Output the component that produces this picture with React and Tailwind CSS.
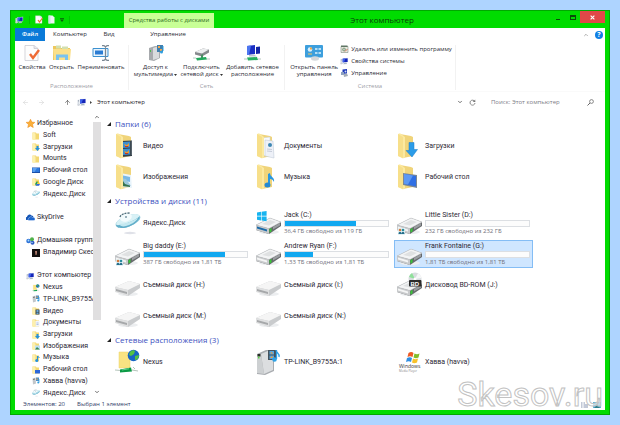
import React from 'react'
import { ArrowLeft, ArrowRight, ArrowUp, ChevronDown, ChevronUp } from 'lucide-react'

const Computer = ({ className }) => (
    <svg viewBox="0 0 20 16" className={className}>
        <path d="M1 4l4-1v9l-4 1z" fill="#d5dbe3" />
        <path d="M2 5l2-.5v2L2 7z" fill="#8b95a5" />
        <path d="M5 2l13-1v10L5 12z" fill="#e8edf5" />
        <path d="M6 3l11-1v8L6 11z" fill="#1424b8" />
        <path d="M6 3l6-.5L9 10.6 6 11z" fill="#3d62ea" />
        <path d="M9 12l5-.5 2 3-9 .5z" fill="#a9b7c7" />
        <path d="M0 13l5-1 2 2-5 2z" fill="#c9ced6" />
    </svg>
)

// small yellow folder, children are painted over its lower right corner
const MiniFolder = ({ children }) => (
    <svg viewBox="0 0 16 16" className="h-2 w-2 shrink-0">
        <path d="M1 1h7l1 2h5v12H1z" fill="#f3d873" />
        <path d="M1 1l6 2v13l-6-1z" fill="#fdf0ae" />
        {children}
    </svg>
)

const Wmp = ({ className }) => (
    <svg viewBox="0 0 16 16" className={className}>
        <path d="M1 3l6-2 1 12-6 2z" fill="#c2c6ca" />
        <path d="M2 4l4-1v2L2 6z" fill="#777" />
        <path d="M8 1h6v7H8z" fill="#4b8fc6" />
        <path d="M9 3h2v3H9z" fill="#f7a23c" />
        <path d="M14 4v7" stroke="#2f9fe0" strokeWidth="1.5" />
        <circle cx="12.500" cy="11" r="2" fill="#2f9fe0" />
    </svg>
)

const YaDisk = ({ className }) => (
    <svg viewBox="0 0 26 24" className={className}>
        <ellipse cx="15" cy="22" rx="6" ry="1.200" fill="#dfe1e8" />
        <ellipse cx="13" cy="10" rx="13" ry="5.500" transform="rotate(-20 13 10)" fill="#8fc8da" />
        <ellipse cx="13" cy="9" rx="12.500" ry="4.500" transform="rotate(-20 13 9)" fill="#d8f1f6" />
        <path d="M1 14c5 1 17-3 24-9-1 6-9 11-16 12-4 0-7 0-8-3z" fill="#62aec9" />
        <path d="M4 13c6 0 14-3 19-6-2 4-8 7-12 8-3 1-6 0-7-2z" fill="#c4e8f0" />
        <ellipse cx="11" cy="6.500" rx="6" ry="4" transform="rotate(-20 11 6.500)" fill="#f3fbfd" />
        <path d="M5 6c1-3 5-4 10-4" stroke="#4a6a78" strokeWidth="1.300" strokeDasharray="2 1" fill="none" />
        <circle cx="11" cy="6" r="1" fill="#7c98a4" />
    </svg>
)

const Flag = () => (
    <g>
        <path d="M1 2.500l4-.7v4H1zM5.600 1.700l5-.8v4.900h-5zM1 6.400h4v4l-4-.7zM5.600 6.400h5v4.900l-5-.8z" fill="#16b4f0" />
    </g>
)

const Drive = ({ kind }) => (
    <svg viewBox="0 0 26 26" className="h-[26px] w-[26px]">
        <ellipse cx="13" cy="22" rx="10" ry="2" fill="#eceef0" />
        {kind === "removable" ? (
            <g>
                <path d="M0 15l14-6 11 3v4l-12 8L0 19z" fill="#c9cbcd" />
                <path d="M0 15l14-6 11 3-12 6z" fill="#f5f5f5" />
                <path d="M0 15l13 3v6L0 20z" fill="#dfe0e1" />
                <path d="M1 17l11 3v2L1 19z" fill="#a6a8aa" />
            </g>
        ) : (
            <g>
                <path d="M0 15l14-7 11 4v4l-12 8L0 20z" fill="#66696c" />
                <path d="M0 15L14 8l11 4-12 6.500z" fill="#f3f4f5" stroke="#c4c6c8" strokeWidth=".5" />
                <path d="M6 14l8-4 6 2-7 3.500z" fill="#dfe1e2" />
                <path d="M0 15l13 3.500v5.500L0 20z" fill="#c8cacc" />
                <path d="M1 16.500l10 3v2l-10-3z" fill={kind === "system" ? "#1c6ba8" : "#f4f5f5"} />
                <path d="M13.500 19l2-1v3.500l-2 1z" fill="#37c837" />
                <path d="M17 17l7-4v2.500l-7 4z" fill="#9b9ea1" />
            </g>
        )}
        {kind === "system" && <Flag />}
        {kind === "shared" && (
            <g>
                <path d="M1 18h7v7H1z" fill="#e4f2f6" />
                <circle cx="3" cy="20" r="1.300" fill="#d67a3a" />
                <circle cx="6" cy="20" r="1.300" fill="#2b8c9e" />
                <path d="M1.500 24c0-3 3-3 3 0zM4.500 24c0-3 3-3 3 0z" fill="#256e8a" />
            </g>
        )}
        {kind === "bd" && (
            <g>
                <circle cx="18" cy="7" r="6.500" fill="#d8dcdf" />
                <path d="M18 7l-6-2a6.500 6.500 0 013-4z" fill="#8fe09a" />
                <path d="M18 7l3-5.800a6.500 6.500 0 013.500 4.800z" fill="#f6f7f8" />
                <circle cx="18" cy="7" r="1.500" fill="#fff" />
                <rect x="12" y="8" width="12.500" height="6.500" rx="1" fill="#2b2b2b" />
                <text x="13.500" y="13.500" fontSize="6" fontWeight="700" fill="#fff" fontFamily="Liberation Sans">BD</text>
            </g>
        )}
    </svg>
)

const Folder = ({ kind }) => (
    <svg viewBox="0 0 26 26" className="h-[26px] w-[26px]">
        <path d="M3 1l11 2 2 1v19l-10 2z" fill="#f0d47a" />
        {kind === "video" && (
            <g>
                <path d="M6 8l11-.5V23L6 24z" fill="#34404a" />
                <path d="M8 9l7-.4v6l-7 .5zM8 16l7-.5v6L8 22z" fill="#3b8fd0" />
                <path d="M9 11l3 1 2-2v3l-3 1zM9 18l3 1 2-2v3l-3 1z" fill="#f09a2c" />
                <path d="M10 13h3v1h-3zM10 20h3v1h-3z" fill="#c2332a" />
                <path d="M6.800 9v14M16.300 8.500v14" stroke="#cfd6da" strokeWidth=".6" strokeDasharray="1 1" />
            </g>
        )}
        {kind === "images" && (
            <g>
                <path d="M5 9l11 2 1 13-12-1z" fill="#e9f4fb" />
                <path d="M6 11l9 2v5l-9-2z" fill="#79b8e6" />
                <path d="M6 15l9 6v2l-9-1z" fill="#35734e" />
                <path d="M6 14l5 1 5 7-6-2z" fill="#9ac7dc" />
            </g>
        )}
        {kind === "documents" && (
            <g>
                <path d="M6 5l8-1v18l-8 1z" fill="#f8fafc" stroke="#c6cfd8" strokeWidth=".5" />
                <path d="M9 7l8 1 1 17-9-2z" fill="#eef1f8" stroke="#b9c4d2" strokeWidth=".5" />
                <circle cx="14" cy="12" r="2" fill="#3d87b4" />
                <path d="M11 16l5 .5M11 18l5 .5" stroke="#b4bccb" strokeWidth=".7" />
            </g>
        )}
        <path d="M1 1l2-.8L8 4v20l-2 1.500L1 23z" fill="#fbe9a0" />
        <path d="M1 1l5 3v21l-5-2z" fill="#f7df8a" />
        {kind === "downloads" && <path d="M12 9.500h5v7h3.500L15 24l-6-6.500h3z" fill="#2c9ce8" stroke="#1b7dc8" strokeWidth=".5" />}
        {kind === "music" && (
            <g>
                <path d="M12 10l2-1c0 4 5 4 4 9-1-2-2-3-4-3v6h-2z" fill="#2997df" />
                <ellipse cx="11.500" cy="21" rx="3" ry="2.500" fill="#2389d3" />
            </g>
        )}
        {kind === "desktop" && (
            <g>
                <path d="M6 9l14 2v13L6 21z" fill="#7b8794" />
                <path d="M7 10l12 2v10.500L7 20z" fill="#2f6fe4" />
                <path d="M7 10l9 1.500L11 20.500l-4-.8z" fill="#5c98f3" />
            </g>
        )}
    </svg>
)

const Nexus = ({ className }) => (
    <svg viewBox="0 0 26 26" className={className}>
        <path d="M4 3h9l2 2v14H4z" fill="#f9e382" stroke="#ead06a" strokeWidth=".5" />
        <circle cx="18.500" cy="6.500" r="5.800" fill="#1766c4" />
        <path d="M15 3c2-2 4-2 5-1l-1 3-3 2-2-1zM20 7l4-1c0 3-2 5-4 5z" fill="#54c242" />
        <path d="M0 21l6 .5M17 21l6 1M18 18l2 2" stroke="#b3c4ba" strokeWidth="1" />
        <path d="M5 20.500l11-2 1 4-12 1z" fill="#0b9a45" />
        <path d="M7 20.500l7-1.200v1L7 21.500z" fill="#63d38e" />
    </svg>
)

const Server = () => (
    <svg viewBox="0 0 26 26" className="h-[26px] w-[26px]">
        <path d="M1 5l9-4h6l2 2v19L9 26l-8-1z" fill="#a9acb0" />
        <path d="M5 5l9-4 3 1v19L8 25z" fill="#dcdee0" />
        <path d="M1 5h4l3 20-7-1z" fill="#cdd0d2" />
        <path d="M1.500 5h3v2.500h-3z" fill="#2b2f2b" />
        <path d="M2 7.500h1.500v2H2z" fill="#5ad046" />
        <path d="M12 1h8v10h-8z" fill="#44525d" />
        <path d="M13.500 2H18v3.500h-4.500zM13.500 6.500H18V10h-4.500z" fill="#56a6df" />
        <path d="M14 4l2-1 1 2zM14 9l2-2 1 2z" fill="#ee9d3c" />
        <path d="M20 1c0 3 4 3 3 7M20.500 1v9" stroke="#2ea2e6" strokeWidth="1.300" fill="none" />
        <circle cx="18.500" cy="10.500" r="2.300" fill="#2ea2e6" />
    </svg>
)

const WindowsMedia = () => (
    <svg viewBox="0 0 26 26" className="h-[26px] w-[26px]">
        <path d="M11.500 4c2-1.500 4-1 5 0l-1 4c-2-1-3-1-5 0z" fill="#ee5a24" />
        <path d="M17.500 4.500c2 1 3 1 5 0l-1 4c-2 1-3 1-5 0z" fill="#83bd29" />
        <path d="M10 9c2-1 3.500-1 5 0l-1 4c-1.500-1-3-1-5 0z" fill="#2f8fe3" />
        <path d="M16 9.500c2 1 3 1 5 0l-1 4c-2 1-3.500 1-5 0z" fill="#f8c12a" />
        <text x="2" y="19" fontSize="5" fill="#333" fontFamily="Open Sans">Windows</text>
        <text x="2" y="23" fontSize="3" fill="#888" fontFamily="Open Sans">Media Player</text>
    </svg>
)

const icons16 = "h-4 w-[18px]"

const PropsIcon = ({ className }) => (
    <svg viewBox="0 0 16 16" className={className}>
        <path d="M1 .500h9l4 3v12H1z" fill="#fdfdfd" stroke="#c4c4cb" strokeWidth=".700" />
        <path d="M10 .500v3h4" fill="#e8e8ee" stroke="#c4c4cb" strokeWidth=".700" />
        <path d="M6 9l3 4 6-8" fill="none" stroke="#ee6a35" strokeWidth="2.400" />
    </svg>
)

const OpenIcon = () => (
    <svg viewBox="0 0 18 16" className={icons16}>
        <path d="M0 1h6l1 2h10v12H0z" fill="#eec85c" />
        <path d="M3 .500h5v3H3zM9 1.500h6v3H9z" fill="#d3dfb0" />
        <path d="M0 4h18l-1 11H1z" fill="#fbe08a" />
        <path d="M3 15V9.500h12V15h-3v-2.500H6V15z" fill="#79c2ee" />
    </svg>
)

const RenameIcon = () => (
    <svg viewBox="0 0 18 16" className={icons16}>
        <path d="M1 3.500h15v8H1z" fill="#eaf4fc" stroke="#3c91d0" />
        <path d="M3 5.500h8v4H3z" fill="#2b7cd3" />
        <path d="M10 .700h2l1.500 1 1.500-1h2M13.500 1.500v13M10 15.300h2l1.500-1 1.500 1h2" fill="none" stroke="#7a8792" strokeWidth="1.200" />
    </svg>
)

const MediaIcon = () => (
    <svg viewBox="0 0 18 16" className={icons16}>
        <path d="M2 3l6-2h5v12l-6 3-5-1z" fill="#a7aaad" />
        <path d="M6 3l6-2v12l-6 2z" fill="#d9dbdd" />
        <path d="M10 0h6v7h-6z" fill="#3f7fae" />
        <path d="M11 1h2v2h-2zM13 4h2v2h-2z" fill="#f3a54a" />
        <path d="M16 1v5" stroke="#2f9fe0" />
        <circle cx="14.500" cy="7" r="1.500" fill="#2f9fe0" />
        <path d="M3 5h1v2H3z" fill="#4dbb4d" />
    </svg>
)

const NetDriveIcon = () => (
    <svg viewBox="0 0 18 16" className={icons16}>
        <path d="M2 7l8-3.500 6 1v3l-7 4-7-2z" fill="#85898c" />
        <path d="M2 7l8-3.500 6 1-7 4z" fill="#eceeef" />
        <path d="M8 10l2-1v4H8z" fill="#4b8b63" />
        <path d="M3 13l10-1 1 2.500-10 1z" fill="#21a85b" />
        <path d="M0 13h3M14 14h3" stroke="#b8c8bf" />
    </svg>
)

const AddNetIcon = () => (
    <svg viewBox="0 0 18 16" className={icons16}>
        <path d="M3 1l8-1v9l-8 1z" fill="#1a2fc4" />
        <path d="M3 1l4-.500L5 10H3z" fill="#4d76f0" />
        <path d="M12 2l4-.500v7l-4 .500z" fill="#1426a6" />
        <path d="M5 10l5-.500 3 2H5z" fill="#bac5cf" />
        <path d="M3 12.500l10-.500 1 3-10 .500z" fill="#25ae5f" />
        <path d="M0 14h3M14 14h3" stroke="#b8c8bf" />
    </svg>
)

const PanelIcon = () => (
    <svg viewBox="0 0 18 16" className={icons16}>
        <rect x="0" y="0" width="18" height="12.500" rx="1" fill="#3d9fdd" />
        <circle cx="5" cy="4.500" r="2.300" fill="#d8effc" />
        <path d="M5 4.500V2.200a2.300 2.300 0 012.300 2.300z" fill="#f5a53c" />
        <path d="M10 3h2.500v2H10zM13.500 3H16v2h-2.500zM10 7h2.500v2H10zM13.500 7H16v2h-2.500z" fill="#b6dff6" />
        <path d="M3 9h4" stroke="#f5c35c" />
        <ellipse cx="10" cy="13.500" rx="4" ry="2.200" fill="#d5d8db" />
    </svg>
)

const UninstallIcon = () => (
    <svg viewBox="0 0 16 16" className="h-2 w-[9px]">
        <path d="M1 3h14v12H1z" fill="#e8eadf" stroke="#6c7a6c" />
        <path d="M1 1h13v3H1z" fill="#5f7564" />
        <circle cx="7" cy="9" r="3" fill="#b9cdb5" stroke="#4f6b52" />
        <path d="M9 13l5-5" stroke="#d9785a" strokeWidth="2" />
    </svg>
)

const ManageIcon = () => (
    <svg viewBox="0 0 16 16" className="h-2 w-[9px]">
        <path d="M4 1l9-1v9l-9 1z" fill="#1c36b8" />
        <path d="M1 6h6v6H1z" fill="#8ca0c0" />
        <path d="M6 10l7-1 2 5-8 2z" fill="#a4adb7" />
        <circle cx="10" cy="5" r="2" fill="#d0def5" />
    </svg>
)

const Star = () => (
    <svg viewBox="0 0 16 16" className="h-[9px] w-[9px] shrink-0">
        <path d="M8 .500l2.300 5 5.500.500-4.200 3.700 1.300 5.500L8 12.300l-4.900 2.900 1.300-5.500L.200 6l5.500-.500z" fill="#fbb03a" stroke="#ee8f1e" />
    </svg>
)

const Cloud = () => (
    <svg viewBox="0 0 18 14" className="h-[7px] w-[9px] shrink-0">
        <path d="M2 12a3 3 0 010-6 5 5 0 019-3 4 4 0 014 4 3 3 0 011 5z" fill="#1153b5" />
        <path d="M5 13a3 3 0 011-5 4 4 0 017-1 3 3 0 013 6z" fill="#1d66cf" stroke="#fff" strokeWidth=".700" />
    </svg>
)

const HomeGroup = () => (
    <svg viewBox="0 0 18 16" className="h-2 w-[9px] shrink-0">
        <circle cx="5" cy="8" r="4.500" fill="#2f73d8" />
        <circle cx="12" cy="4.500" r="4" fill="#4fb24a" />
        <circle cx="13" cy="11.500" r="4" fill="#2b59c3" />
        <circle cx="5" cy="7" r="1.800" fill="#a7dcf8" />
        <circle cx="12" cy="11" r="1.500" fill="#a7dcf8" />
    </svg>
)

const Avatar = () => (
    <svg viewBox="0 0 16 16" className="h-2 w-2 shrink-0">
        <path d="M0 0h16v16H0z" fill="#141010" />
        <path d="M6 4h4v4l-1 4H7z" fill="#b07a6c" />
    </svg>
)

const Monitor = () => (
    <svg viewBox="0 0 16 14" className="h-[7px] w-2 shrink-0">
        <path d="M0 1h16v11H0z" fill="#1b4fa8" />
        <path d="M1 2h14v8H1z" fill="#2d78dd" />
        <path d="M1 2h9L5 10H1z" fill="#5da0ee" />
    </svg>
)

const miniPaints = {
    down: <path d="M9 6h4v4h3l-5 6-5-6h3z" fill="#2391e0" />,
    gdrive: <g><path d="M10 6h3l3 6h-3z" fill="#f6c52c" /><path d="M10 6l1.500 3L8 15l-2-3z" fill="#1d9d58" /><path d="M9 12h7l-2 3.500H7z" fill="#2f68dd" /></g>,
    video: <g><path d="M7 5h8v10H7z" fill="#36454f" /><path d="M9 6h4v4H9zM9 11h4v3H9z" fill="#67a7d8" /></g>,
    docs: <g><path d="M7 4h8v11H7z" fill="#f1f4fb" /><path d="M9 8h4M9 11h4" stroke="#6c93c4" /></g>,
    images: <g><path d="M6 7h10v8H6z" fill="#bfe0f5" /><path d="M6 15l4-5 6 5z" fill="#3b8a58" /></g>,
    music: <g><path d="M11 4v9" stroke="#2391e0" strokeWidth="2" /><circle cx="9.500" cy="13" r="3" fill="#2391e0" /><path d="M11 4l4 4" stroke="#2391e0" strokeWidth="2" /></g>,
    desktop: <path d="M6 8h10v7H6z" fill="#2c67d8" />,
}

const small = (kind) => <MiniFolder>{miniPaints[kind]}</MiniFolder>
const ya = <YaDisk className="h-2 w-2 shrink-0" />

const treeItems = [
    { text: "Избранное", icon: <Star />, root: true },
    { text: "Soft", icon: small() },
    { text: "Загрузки", icon: small("down") },
    { text: "Mounts", icon: small() },
    { text: "Рабочий стол", icon: <Monitor /> },
    { text: "Google Диск", icon: small("gdrive") },
    { text: "Яндекс.Диск", icon: ya },
    null,
    { text: "SkyDrive", icon: <Cloud />, root: true },
    null,
    { text: "Домашняя группа", icon: <HomeGroup />, root: true },
    { text: "Владимир Скесов", icon: <Avatar /> },
    null,
    { text: "Этот компьютер", icon: <Computer className="h-2 w-[9px] shrink-0" />, root: true },
    { text: "Nexus", icon: <Nexus className="h-2 w-2 shrink-0" /> },
    { text: "TP-LINK_B9755A:1", icon: <Wmp className="h-2 w-2 shrink-0" /> },
    { text: "Видео", icon: small("video") },
    { text: "Документы", icon: small("docs") },
    { text: "Загрузки", icon: small("down") },
    { text: "Изображения", icon: small("images") },
    { text: "Музыка", icon: small("music") },
    { text: "Рабочий стол", icon: small("desktop") },
    { text: "Хавва (havva)", icon: <Wmp className="h-2 w-2 shrink-0" /> },
    { text: "Яндекс.Диск", icon: ya },
]

const sections = [
    {
        title: "Папки (6)",
        items: [
            { name: "Видео", icon: <Folder kind="video" /> },
            { name: "Документы", icon: <Folder kind="documents" /> },
            { name: "Загрузки", icon: <Folder kind="downloads" /> },
            { name: "Изображения", icon: <Folder kind="images" /> },
            { name: "Музыка", icon: <Folder kind="music" /> },
            { name: "Рабочий стол", icon: <Folder kind="desktop" /> },
        ],
    },
    {
        title: "Устройства и диски (11)",
        items: [
            { name: "Яндекс.Диск", icon: <YaDisk className="h-6 w-[26px]" /> },
            { name: "Jack (C:)", icon: <Drive kind="system" />, used: 69, info: "36,4 ГБ свободно из 119 ГБ" },
            { name: "Little Sister (D:)", icon: <Drive kind="shared" />, used: 0, info: "232 ГБ свободно из 232 ГБ" },
            { name: "Big daddy (E:)", icon: <Drive kind="shared" />, used: 79, info: "387 ГБ свободно из 1,81 ТБ" },
            { name: "Andrew Ryan (F:)", icon: <Drive />, used: 27, info: "1,33 ТБ свободно из 1,81 ТБ" },
            { name: "Frank Fontaine (G:)", icon: <Drive />, used: 0, info: "1,81 ТБ свободно из 1,81 ТБ" },
            { name: "Съемный диск (H:)", icon: <Drive kind="removable" /> },
            { name: "Съемный диск (I:)", icon: <Drive kind="removable" /> },
            { name: "Дисковод BD-ROM (J:)", icon: <Drive kind="bd" /> },
            { name: "Съемный диск (M:)", icon: <Drive kind="removable" /> },
            { name: "Съемный диск (N:)", icon: <Drive kind="removable" /> },
        ],
    },
    {
        title: "Сетевые расположения (3)",
        items: [
            { name: "Nexus", icon: <Nexus className="h-[26px] w-[26px]" /> },
            { name: "TP-LINK_B9755A:1", icon: <Server /> },
            { name: "Хавва (havva)", icon: <WindowsMedia /> },
        ],
    },
]

const BigButton = ({ icon, lines, drop, className }) => (
    <button className={`flex flex-col items-center whitespace-nowrap leading-[7px] text-[#2a2a34] ${className}`}>
        <span className="mb-[3px]">{icon}</span>
        {lines.map((line, i) => (
            <span key={line} className="flex items-center">
                {line}
                {drop && i === lines.length - 1 && (
                    <svg viewBox="0 0 6 4" className="ml-px h-[2px] w-[3px]"><path d="M0 0h6L3 4z" fill="#333" /></svg>
                )}
            </span>
        ))}
    </button>
)

const Group = ({ title, className, children }) => (
    <div className={`flex flex-col justify-between border-r border-[#f2f2f2] ${className}`}>
        <div className="flex justify-center">{children}</div>
        <p className="text-center leading-2 text-[#a0a0a8]">{title}</p>
    </div>
)

const Tile = ({ item, selected, onSelect }) => (
    <button
        onClick={onSelect}
        className={`mr-[2px] flex h-7 items-center border pl-[2px] text-left ${selected ? 'border-[#84bdf5] bg-[#cfe6ff]' : 'border-transparent'}`}
    >
        <span className="w-7 shrink-0">{item.icon}</span>
        <span className="flex w-[105px] flex-col whitespace-nowrap leading-[9px]">
            {item.name}
            {item.info && (
                <>
                    <span className="flex h-[7px] border border-[#dcdfe3] bg-[#fcfcfc]">
                        <span className="bg-[#12a8f0]" style={{ width: `${item.used}%` }}></span>
                    </span>
                    <span className="font-['Open_Sans',sans-serif] text-[6px] leading-[9px] text-[#70707a]">{item.info}</span>
                </>
            )}
        </span>
    </button>
)

const App = () => {

    const [selected, setSelected] = React.useState("Frank Fontaine (G:)")
    const [query, setQuery] = React.useState("")

  return (
    <div className="flex min-h-screen bg-[#aed4ff] p-[10px] font-['Open_Sans','Noto_Sans',sans-serif] text-[6px] text-[#1c1826]">
      <div className="relative flex min-w-0 flex-1 flex-col border border-[#00a800] bg-[#00dc00]">

        {/* title bar */}
        <header className="flex h-[17px] shrink-0 items-stretch">
            <div className="flex w-[113px] items-center gap-[5px] pl-1">
                <Computer className="h-2 w-[9px]" />
                <span className="h-2 w-px bg-[#00c000]"></span>
                <button aria-label="Свойства"><PropsIcon className="h-[9px] w-2" /></button>
                <button aria-label="Новая папка">
                    <svg viewBox="0 0 14 16" className="h-[9px] w-[7px]">
                        <path d="M1 0h8l4 4v12H1z" fill="#eef5f4" />
                        <path d="M1 0h4v16H1z" fill="#cfe3e8" />
                    </svg>
                </button>
                <button aria-label="Настроить">
                    <svg viewBox="0 0 8 8" className="h-1 w-1"><path d="M0 0h8v1.500H0zM0 3h8L4 8z" fill="#0a5a0a" /></svg>
                </button>
                <span className="h-2 w-px bg-[#00c000]"></span>
            </div>
            <div className="mt-[2px] flex w-[90px] items-center justify-center whitespace-nowrap bg-[#c8ff96] text-[#2c6a1c]">
                Средства работы с дисками
            </div>
            <h1 className="flex flex-1 items-center justify-center text-[8px] text-[#0a3c0a]">
                Этот компьютер
            </h1>
            <div className="flex items-start">
                <button aria-label="Свернуть" className="flex h-3 w-[15px] items-center justify-center"><span className="mt-1 h-px w-1 bg-[#0a4a0a]"></span></button>
                <button aria-label="Развернуть" className="flex h-3 w-[15px] items-center justify-center"><span className="h-[5px] w-[6px] border border-t-2 border-[#0a4a0a]"></span></button>
                <button aria-label="Закрыть" className="mr-1 flex h-3 w-[25px] items-center justify-center bg-[#e04848]">
                    <svg viewBox="0 0 8 8" className="h-[5px] w-[5px]"><path d="M1 1l6 6M7 1L1 7" stroke="#fff" strokeWidth="1.800" /></svg>
                </button>
            </div>
        </header>

        <div className="mx-1 mb-1 flex min-h-0 flex-1 flex-col bg-white">

            <nav className="flex h-[13px] shrink-0 items-center text-[#2a2a34]">
                <button className="h-full w-[30px] bg-[#0a7ad8] font-semibold text-white">Файл</button>
                <button className="w-[50px]">Компьютер</button>
                <button className="w-7">Вид</button>
                <button className="w-[90px]">Управление</button>
                <span className="flex flex-1 items-center justify-end gap-[6px] pr-[2px]">
                    <button aria-label="Свернуть ленту"><ChevronUp className="h-[6px] w-[6px] text-[#666]" /></button>
                    <button aria-label="Справка" className="flex h-2 w-2 items-center justify-center rounded-full bg-[#127fe4] text-[7px] font-bold leading-2 text-white">?</button>
                </span>
            </nav>

            {/* ribbon */}
            <div className="flex h-[51px] shrink-0 border-b border-[#fafafa] pt-1 pb-px">
                <Group title="Расположение" className="w-[114px]">
                    <BigButton icon={<PropsIcon className="h-4 w-4" />} lines={["Свойства"]} className="w-[30px]" />
                    <BigButton icon={<OpenIcon />} lines={["Открыть"]} className="w-[29px]" />
                    <BigButton icon={<RenameIcon />} lines={["Переименовать"]} className="w-[50px]" />
                </Group>
                <Group title="Сеть" className="w-[156px]">
                    <BigButton icon={<MediaIcon />} lines={["Доступ к", "мультимедиа"]} drop className="w-[46px]" />
                    <BigButton icon={<NetDriveIcon />} lines={["Подключить", "сетевой диск"]} drop className="w-[46px]" />
                    <BigButton icon={<AddNetIcon />} lines={["Добавить сетевое", "расположение"]} className="w-[56px]" />
                </Group>
                <Group title="Система" className="w-[171px]">
                    <BigButton icon={<PanelIcon />} lines={["Открыть панель", "управления"]} className="w-[52px]" />
                    <div className="flex flex-col gap-1 whitespace-nowrap leading-2 text-[#2a2a34]">
                        <button className="flex gap-[2px]"><UninstallIcon />Удалить или изменить программу</button>
                        <button className="flex gap-[2px]"><Computer className="h-2 w-[9px]" />Свойства системы</button>
                        <button className="flex gap-[2px]"><ManageIcon />Управление</button>
                    </div>
                </Group>
            </div>

            {/* address bar */}
            <div className="flex h-5 shrink-0 items-center">
                <button aria-label="Назад" className="ml-[7px]"><ArrowLeft className="h-[7px] w-[7px] text-[#d4d4d4]" /></button>
                <button aria-label="Вперед" className="ml-[9px]"><ArrowRight className="h-[7px] w-[7px] text-[#d4d4d4]" /></button>
                <button aria-label="Вверх" className="ml-[19px]"><ArrowUp className="h-[7px] w-[7px] text-[#444]" /></button>
                <Computer className="ml-[6px] h-2 w-[10px]" />
                <svg viewBox="0 0 4 6" className="mr-1 ml-[3px] h-[3px] w-[2px]"><path d="M0 0l4 3-4 3z" fill="#444" /></svg>
                <a href="#computer" className="flex-1 pl-px">Этот компьютер</a>
                <button aria-label="История"><ChevronDown className="h-[6px] w-[6px] text-[#444]" strokeWidth={3} /></button>
                <button aria-label="Обновить" className="mr-[15px] ml-[6px]">
                    <svg viewBox="0 0 14 14" className="h-[7px] w-[7px]">
                        <path d="M11.500 5A5 5 0 1012 8" fill="none" stroke="#777" strokeWidth="1.700" />
                        <path d="M12.500 1v5h-5z" fill="#777" />
                    </svg>
                </button>
                <input
                    aria-label="Поиск"
                    value={query}
                    onChange={(e) => setQuery(e.target.value)}
                    placeholder="Поиск: Этот компьютер"
                    className="w-[96px] outline-none placeholder:text-[#7c7c86]"
                />
                <svg viewBox="0 0 14 14" className="mr-[11px] h-[7px] w-[7px]">
                    <circle cx="9" cy="5" r="3.800" fill="none" stroke="#666" strokeWidth="1.500" />
                    <path d="M6 8l-5 5" stroke="#666" strokeWidth="2" />
                </svg>
            </div>

            <div className="flex min-h-0 flex-1 font-['Roboto','Open_Sans',sans-serif]">
                <aside className="flex w-[78px] shrink-0 flex-col overflow-hidden pt-[6px] pl-[11px] text-[7px] text-[#2c2834]">
                    {treeItems.map((item, i) => item ? (
                        <a key={i} href="#folder" className={`flex flex-1 items-center whitespace-nowrap leading-[9px] ${item.root ? 'gap-[2px]' : 'gap-[3px] pl-[6px]'}`}>
                            {item.icon}
                            {item.text}
                        </a>
                    ) : <span key={i} className="flex-1"></span>)}
                </aside>
                <div className="flex w-2 shrink-0 flex-col items-center">
                    <ChevronUp className="my-[2px] h-[6px] w-[6px] shrink-0 text-[#444]" strokeWidth={3} />
                    <span className="w-full flex-[74] bg-[#e0dfe0]"></span>
                    <span className="flex-[26]"></span>
                    <ChevronDown className="mb-1 h-[6px] w-[6px] shrink-0 text-[#444]" strokeWidth={3} />
                </div>
                <main className="min-w-0 flex-1 pt-1 pl-[6px] text-[7px] text-[#2c2834]">
                    {sections.map((section) => (
                        <section key={section.title}>
                            <h2 className="flex h-[15px] items-center font-['Open_Sans',sans-serif] text-[8px] text-[#3c50c0]">
                                <svg viewBox="0 0 6 6" className="mr-1 h-1 w-1"><path d="M6 0v6H0z" fill="#222" /></svg>
                                {section.title}
                            </h2>
                            <div className="grid grid-cols-[repeat(auto-fill,141px)] gap-y-[3px] pt-px pb-[2px] pl-[5px]">
                                {section.items.map((item) => (
                                    <Tile key={item.name} item={item} selected={selected === item.name} onSelect={() => setSelected(item.name)} />
                                ))}
                            </div>
                        </section>
                    ))}
                </main>
            </div>

            <footer className="flex h-[11px] shrink-0 items-center gap-3 pl-2 text-[#323d68]">
                <span>Элементов: 20</span>
                <span>Выбран 1 элемент</span>
                <span className="ml-auto flex gap-1 pr-1">
                    <svg viewBox="0 0 16 12" className="h-[6px] w-2"><path d="M0 2h3M5 2h3M0 6h3M5 6h9M0 10h3M5 10h9" stroke="#8592ae" strokeWidth="2" /></svg>
                    <svg viewBox="0 0 16 12" className="h-[6px] w-2"><path d="M0 0h16v12H0z" fill="#5bb4dd" /><path d="M2 12l6-6 6 6z" fill="#2c7f8a" /></svg>
                </span>
            </footer>
        </div>

        <p className="pointer-events-none absolute right-[6px] bottom-[2px] font-['Roboto',sans-serif] text-[34px] leading-9 text-white/60 [-webkit-text-stroke:1px_#c2c2c2]">
            Skesov.ru
        </p>
      </div>
    </div>
  )
}

export default App
